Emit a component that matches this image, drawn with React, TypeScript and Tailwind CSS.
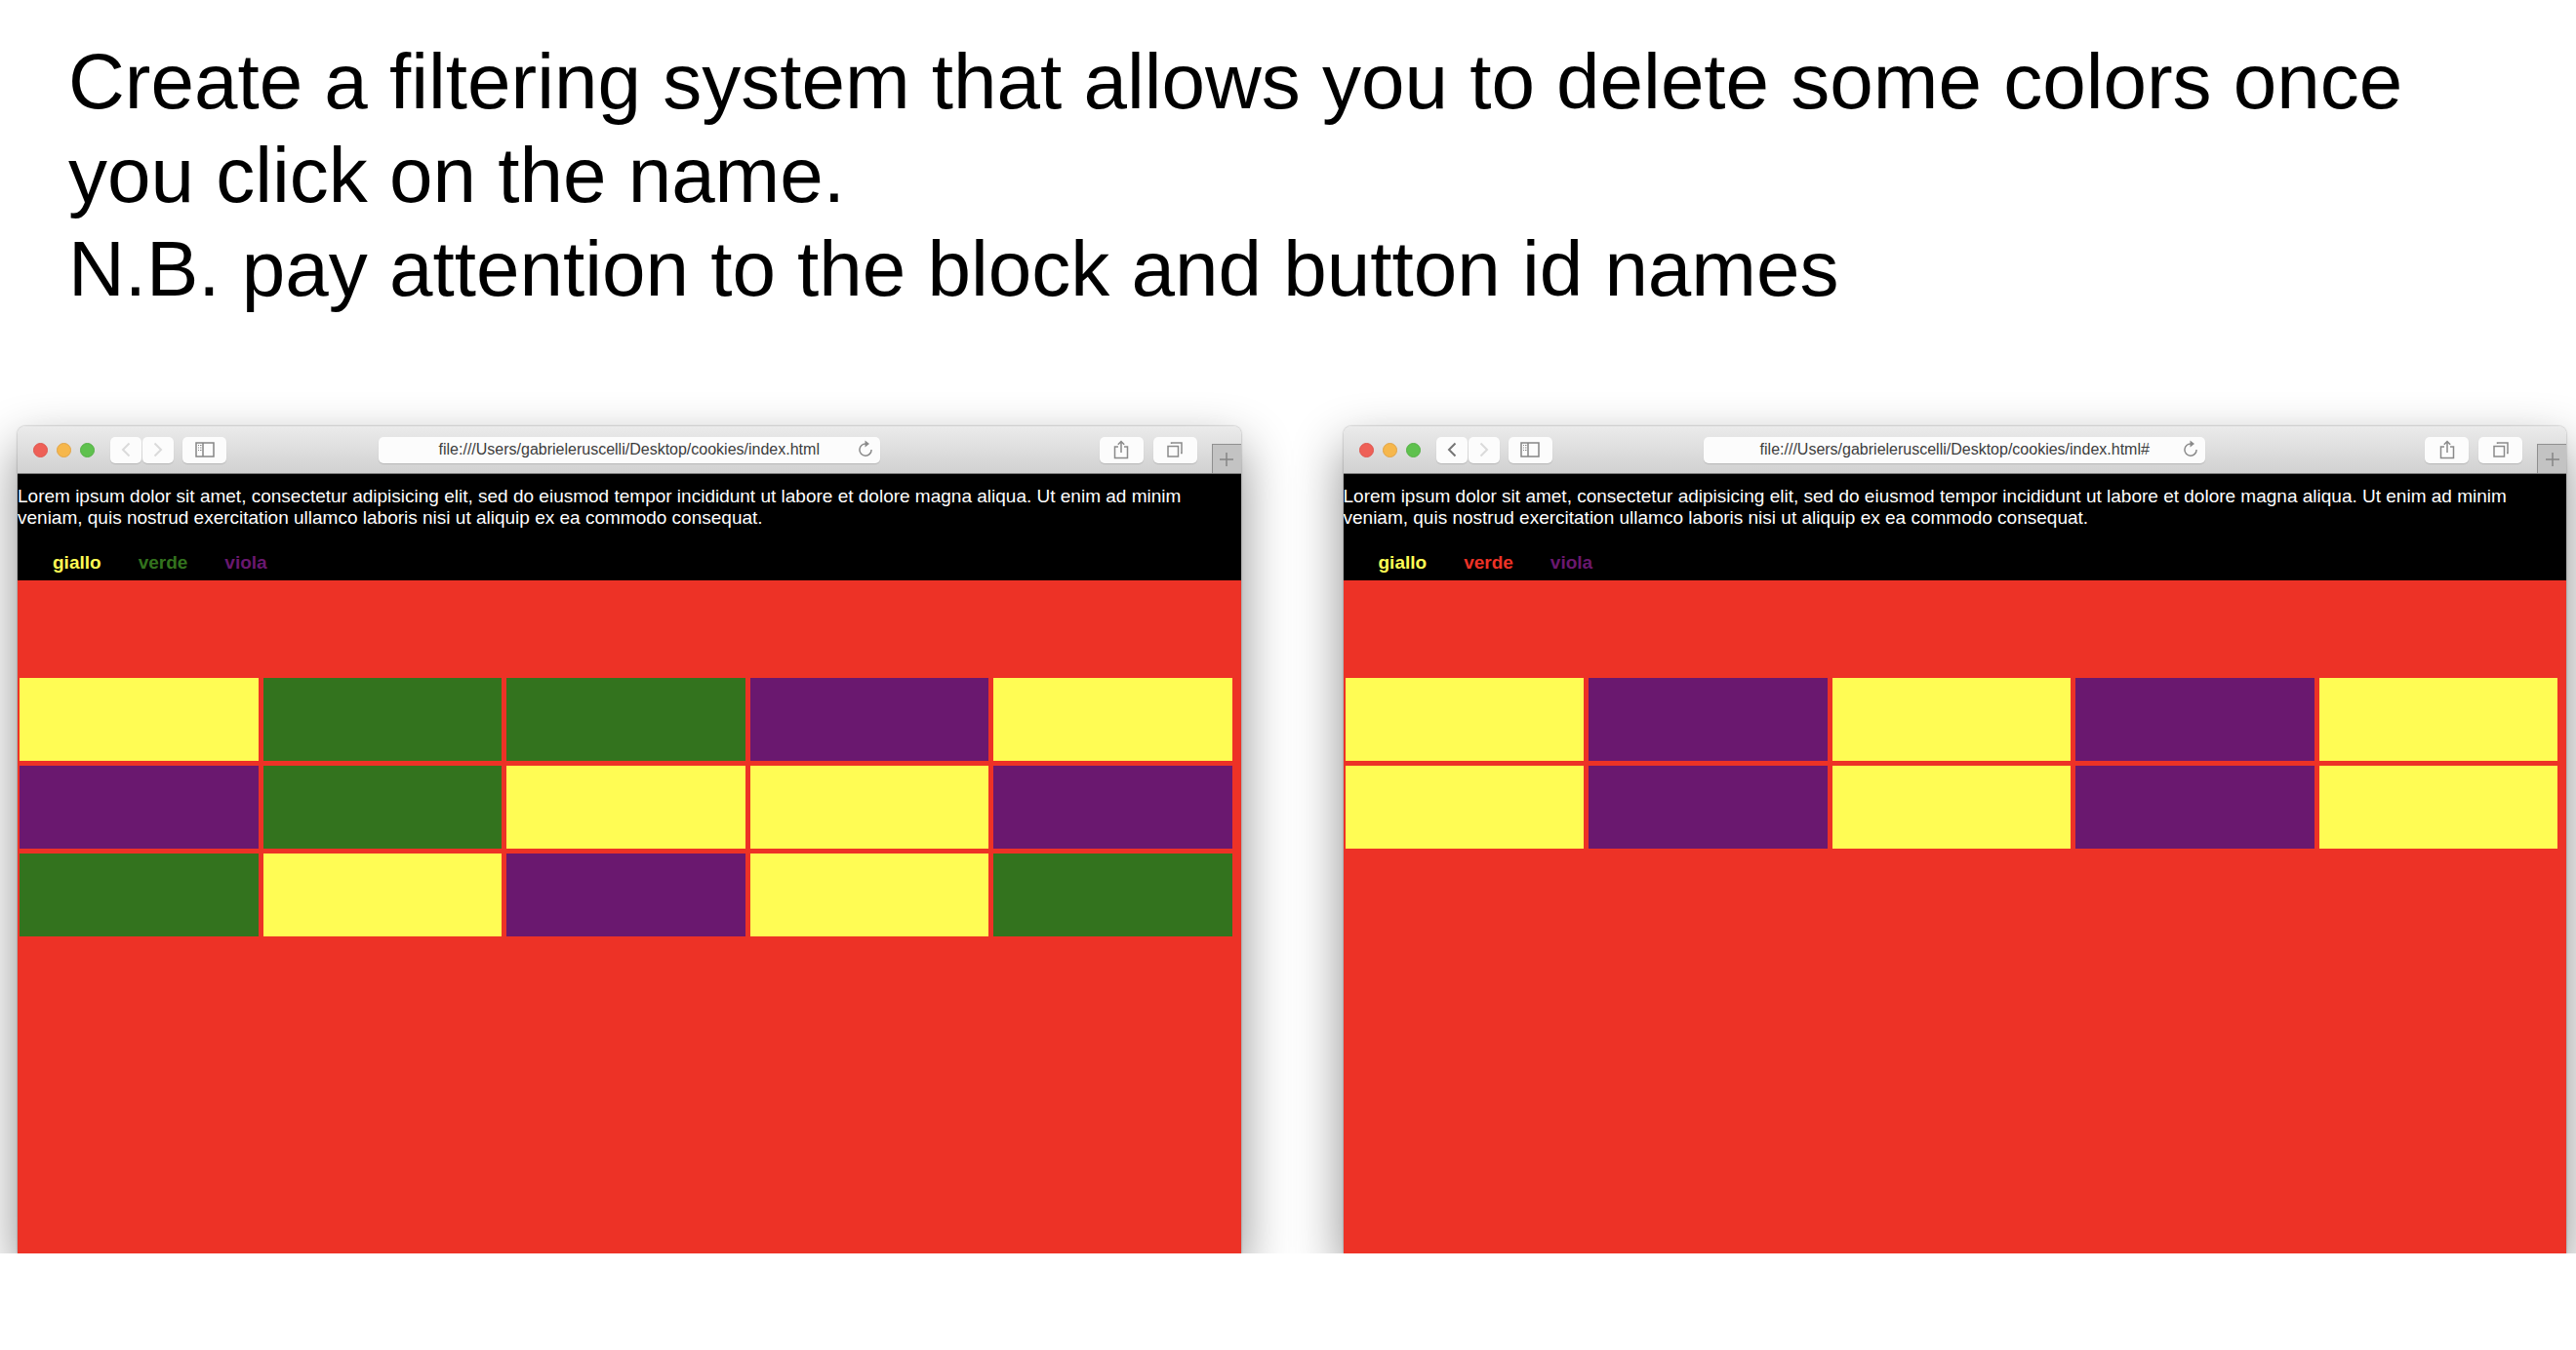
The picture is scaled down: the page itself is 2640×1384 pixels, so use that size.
import { useState, type ReactNode } from "react";

type ColorName = "giallo" | "verde" | "viola";

const BLOCKS: ColorName[] = [
  "giallo", "verde", "verde", "viola", "giallo",
  "viola", "verde", "giallo", "giallo", "viola",
  "verde", "giallo", "viola", "giallo", "verde",
];

const NAMES: ColorName[] = ["giallo", "verde", "viola"];

const BLOCK_CLASS: Record<ColorName, string> = {
  giallo: "bg-[#fffc54]",
  verde: "bg-[#33731e]",
  viola: "bg-[#6a186f]",
};

const LINK_CLASS: Record<ColorName, string> = {
  giallo: "text-[#fffc54]",
  verde: "text-[#33731e]",
  viola: "text-[#6a186f]",
};

function ToolButton({
  label,
  className,
  children,
}: {
  label: string;
  className: string;
  children: ReactNode;
}) {
  return (
    <button
      type="button"
      aria-label={label}
      className={`flex h-[27px] items-center justify-center rounded-[5px] bg-[#fcfcfc] shadow-[0_1px_1px_rgba(0,0,0,0.15)] ${className}`}
    >
      {children}
    </button>
  );
}

function Chevron({ flip, active }: { flip?: boolean; active?: boolean }) {
  return (
    <svg
      width="10"
      height="16"
      viewBox="0 0 10 16"
      fill="none"
      stroke={active ? "#757575" : "#dadada"}
      strokeWidth="2"
    >
      <path d={flip ? "M1.5 1.5 8 8l-6.500 6.500" : "M8.500 1.500 2 8l6.500 6.500"} />
    </svg>
  );
}

function Toolbar({ url, canGoBack }: { url: string; canGoBack?: boolean }) {
  return (
    <div className="grid h-[49px] grid-cols-[1fr_41%_1fr] items-center border-b border-[#7a7a7a] bg-linear-to-b from-[#ebebeb] to-[#d1d1d1]">
      <div className="flex items-center pl-4">
        <div className="flex gap-[9px]">
          <button type="button" aria-label="Close" className="size-[15px] rounded-full border border-[#df564e] bg-[#ee6057]" />
          <button type="button" aria-label="Minimize" className="size-[15px] rounded-full border border-[#e2a445] bg-[#f6b74c]" />
          <button type="button" aria-label="Zoom" className="size-[15px] rounded-full border border-[#54b144] bg-[#5fc14e]" />
        </div>
        <div className="ml-4 flex gap-px">
          <ToolButton label="Back" className="w-8">
            <Chevron active={canGoBack} />
          </ToolButton>
          <ToolButton label="Forward" className="w-8">
            <Chevron flip />
          </ToolButton>
        </div>
        <ToolButton label="Sidebar" className="ml-[9px] w-[45px]">
          <svg width="20" height="16" viewBox="0 0 20 16" fill="none" stroke="#858585" strokeWidth="1.500">
            <path d="M1 1h18v14H1zM8 1v14" />
            <path d="M3 3.500h1M5 3.500h1.500M3 6h1M5 6h1.500M3 8.500h1M5 8.500h1.500" strokeWidth="1" />
          </svg>
        </ToolButton>
      </div>

      <div className="flex h-[27px] items-center rounded-[5px] bg-[#fcfcfc] pl-[30px] shadow-[0_1px_1px_rgba(0,0,0,0.15)]">
        <input
          type="text"
          aria-label="Address"
          defaultValue={url}
          className="min-w-0 flex-1 bg-transparent text-center text-base text-[#3c3c3c] outline-none"
        />
        <button type="button" aria-label="Reload" className="flex w-[30px] justify-center">
          <svg width="14" height="20" viewBox="0 0 14 20" fill="none" stroke="#8a8a8a" strokeWidth="1.500">
            <path d="M7.500 4A6.100 6.100 0 1 0 13.100 10" />
            <path d="M6.500 .5 11 4 6.500 7.500z" fill="#8a8a8a" stroke="none" />
          </svg>
        </button>
      </div>

      <div className="flex h-full items-center justify-end">
        <ToolButton label="Share" className="w-[45px]">
          <svg width="16" height="20" viewBox="0 0 16 20" fill="none" stroke="#8a8a8a" strokeWidth="1.500">
            <path d="M5 7H1.500v11.500h13V7H11M8 13V1.500M4.800 4.800 8 1.500l3.200 3.300" />
          </svg>
        </ToolButton>
        <ToolButton label="Tabs" className="ml-[10px] w-[45px]">
          <svg width="16" height="16" viewBox="0 0 16 16" fill="none" stroke="#8a8a8a" strokeWidth="1.500">
            <path d="M1 4.500h10.500V15H1zM4.500 2V1H15v10.500h-1" />
          </svg>
        </ToolButton>
        <button
          type="button"
          aria-label="New tab"
          className="ml-[15px] flex h-[30px] w-[30px] items-center justify-center self-end border-t border-l border-[#8f8f8f] bg-[#c3c3c3]"
        >
          <svg width="14" height="14" viewBox="0 0 14 14" stroke="#858585" strokeWidth="1.500">
            <path d="M7 0v14M0 7h14" />
          </svg>
        </button>
      </div>
    </div>
  );
}

function BrowserWindow({
  url,
  canGoBack,
  initiallyHidden,
}: {
  url: string;
  canGoBack?: boolean;
  initiallyHidden: ColorName[];
}) {
  const [hidden, setHidden] = useState<ColorName[]>(initiallyHidden);

  const toggle = (name: ColorName) =>
    setHidden((h) => (h.includes(name) ? h.filter((n) => n !== name) : [...h, name]));

  return (
    <article className="rounded-t-lg shadow-[0_0_2px_rgba(0,0,0,0.4),0_22px_52px_rgba(0,0,0,0.46)]">
      <div className="overflow-hidden rounded-t-lg">
        <Toolbar url={url} canGoBack={canGoBack} />
        <header className="bg-black pt-3 pb-[7px] text-white">
          <p className="text-[19px] leading-[22px]">
            Lorem ipsum dolor sit amet, consectetur adipisicing elit, sed do eiusmod tempor
            incididunt ut labore et dolore magna aliqua. Ut enim ad minim veniam, quis nostrud
            exercitation ullamco laboris nisi ut aliquip ex ea commodo consequat.
          </p>
          <nav className="mt-6 flex gap-[38px] pl-9">
            {NAMES.map((name) => (
              <button
                key={name}
                type="button"
                onClick={() => toggle(name)}
                className={`text-[19px] leading-[22px] font-bold ${
                  hidden.includes(name) ? "text-[#ed3226]" : LINK_CLASS[name]
                }`}
              >
                {name}
              </button>
            ))}
          </nav>
        </header>
        <main className="min-h-[690px] bg-[#ed3226] pt-[100px] pr-[9px] pl-[2px]">
          <div className="grid grid-cols-5 gap-[5px]">
            {BLOCKS.map((name, i) =>
              hidden.includes(name) ? null : <div key={i} className={`h-[85px] ${BLOCK_CLASS[name]}`} />,
            )}
          </div>
        </main>
      </div>
    </article>
  );
}

export default function App() {
  return (
    <div className="bg-white font-['Liberation_Sans',Arial,sans-serif] text-black">
      <h1 className="pt-9 pr-10 pl-[70px] text-[80px] leading-[96px]">
        Create a filtering system that allows you to delete some colors once
        <br />
        you click on the name.
        <br />
        N.B. pay attention to the block and button id names
      </h1>
      <section className="grid grid-cols-2 gap-x-[105px] overflow-hidden pt-[113px] pr-[10px] pl-[18px]">
        <BrowserWindow url="file:///Users/gabrieleruscelli/Desktop/cookies/index.html" initiallyHidden={[]} />
        <BrowserWindow
          url="file:///Users/gabrieleruscelli/Desktop/cookies/index.html#"
          canGoBack
          initiallyHidden={["verde"]}
        />
      </section>
    </div>
  );
}
